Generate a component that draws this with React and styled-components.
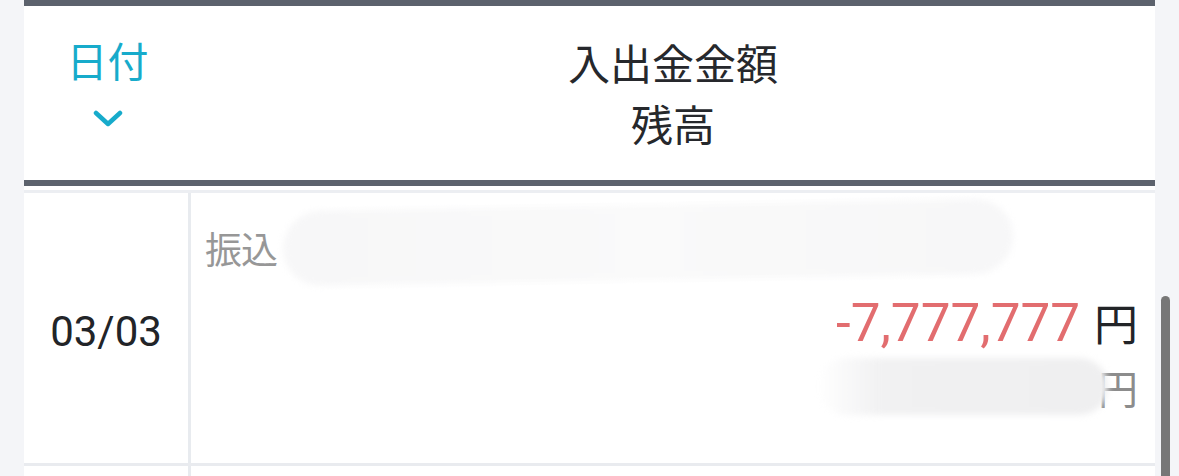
import * as React from "react";
import styled, { createGlobalStyle } from "styled-components";

const GlobalStyle = createGlobalStyle`
  html, body {
    margin: 0;
    padding: 0;
    background: #f4f5f8;
  }

  body {
    font-family: Roboto, "Noto Sans CJK JP", sans-serif;
    color: #222428;
  }
`;

const rows = [
  { date: "03/03", kind: "振込", amount: "-7,777,777" },
];

const Chevron = () => (
  <svg width="30" height="20" viewBox="0 0 30 20" aria-hidden="true">
    <polyline
      points="3,4 15,15 27,4"
      fill="none"
      stroke="#17abcb"
      strokeWidth="4.5"
      strokeLinecap="round"
      strokeLinejoin="round"
    />
  </svg>
);

const App = () => {
  return (
    <Page>
      <GlobalStyle />
      <Ledger>
        <HeadRow>
          <DateHead>
            <span>日付</span>
            <Chevron />
          </DateHead>
          <AmountHead>
            <div>入出金金額</div>
            <div>残高</div>
          </AmountHead>
        </HeadRow>

        {rows.map((row) => (
          <BodyRow key={row.date}>
            <DateCell>{row.date}</DateCell>
            <DetailCell>
              <DescLine>
                <Kind>{row.kind}</Kind>
                <Smudge $width={730} $height={75} />
              </DescLine>
              <AmountLine>
                <Amount $negative={row.amount.startsWith("-")}>
                  {row.amount}
                </Amount>
                <Yen>円</Yen>
              </AmountLine>
              <BalanceLine>
                <Smudge $width={290} $height={57} $fade />
                <Yen $muted>円</Yen>
              </BalanceLine>
            </DetailCell>
          </BodyRow>
        ))}

        <BodyRow $stub>
          <DateCell />
          <DetailCell />
        </BodyRow>
      </Ledger>

      <Gutter>
        <Thumb />
      </Gutter>
    </Page>
  );
};

const Page = styled.div`
  display: flex;
  height: 476px;
  padding-left: 24px;
  overflow: hidden;
  box-sizing: border-box;
`;

const Ledger = styled.div`
  width: 1131px;
  background: #ffffff;
  display: flex;
  flex-direction: column;
`;

const HeadRow = styled.div`
  display: grid;
  grid-template-columns: 167px 1fr;
  flex-shrink: 0;
  height: 174px;
  border-top: 6px solid #5c626d;
  border-bottom: 6px solid #5c626d;
  font-family: "Noto Sans CJK JP", sans-serif;
`;

const DateHead = styled.div`
  display: flex;
  flex-direction: column;
  align-items: center;
  padding-top: 33px;
  color: #17abcb;
  font-size: 41px;
  line-height: 1;

  svg {
    margin-top: 29px;
  }
`;

const AmountHead = styled.div`
  display: flex;
  flex-direction: column;
  align-items: center;
  padding-top: 25px;
  font-size: 42px;
  line-height: 61px;
  color: #26282c;
`;

const BodyRow = styled.div`
  display: grid;
  grid-template-columns: 167px 1fr;
  flex-shrink: 0;
  height: ${(p) => (p.$stub ? "40px" : "270px")};
  margin-top: ${(p) => (p.$stub ? "0" : "4px")};
  border-top: ${(p) => (p.$stub ? "none" : "3px solid #eceef2")};
  border-bottom: ${(p) => (p.$stub ? "none" : "3px solid #e9ebef")};
`;

const DateCell = styled.div`
  display: flex;
  align-items: center;
  justify-content: center;
  border-right: 3px solid #e8ebef;
  font-family: Roboto, sans-serif;
  font-size: 42px;
  color: #222428;
  padding-top: 6px;
`;

const DetailCell = styled.div`
  display: flex;
  flex-direction: column;
  padding: 12px 17px 0 14px;
  min-width: 0;
`;

const DescLine = styled.div`
  display: flex;
  align-items: flex-start;
  height: 75px;
`;

const Kind = styled.span`
  margin-top: 25px;
  font-family: "Noto Sans CJK JP", sans-serif;
  font-size: 37px;
  line-height: 1;
  color: #979797;
  letter-spacing: -1px;
`;

const Smudge = styled.span`
  position: relative;
  z-index: 1;
  flex-shrink: 0;
  width: ${(p) => p.$width}px;
  height: ${(p) => p.$height}px;
  margin-left: ${(p) => (p.$fade ? "0" : "6px")};
  margin-right: ${(p) => (p.$fade ? "-10px" : "0")};
  border-radius: ${(p) => p.$height / 2}px;
  background: ${(p) =>
    p.$fade
      ? "linear-gradient(90deg, rgba(240,240,241,0) 0%, #f1f1f2 22%, #efeff0 100%)"
      : "linear-gradient(90deg, #f7f7f8 0%, #fafafa 50%, #f7f7f8 100%)"};
  filter: blur(3px);
  transform: ${(p) => (p.$fade ? "none" : "skewY(-1deg)")};
`;

const AmountLine = styled.div`
  display: flex;
  align-items: baseline;
  justify-content: flex-end;
  margin-top: 16px;
  height: 52px;
  line-height: 52px;
`;

const Amount = styled.span`
  font-family: Roboto, sans-serif;
  font-size: 53px;
  color: ${(p) => (p.$negative ? "#e26d6f" : "#222428")};
  margin-right: 14px;
`;

const Yen = styled.span`
  font-family: "Noto Sans CJK JP", sans-serif;
  font-size: ${(p) => (p.$muted ? "40px" : "44px")};
  color: ${(p) => (p.$muted ? "#8c8c8c" : "#222428")};
`;

const BalanceLine = styled.div`
  display: flex;
  align-items: center;
  justify-content: flex-end;
  margin-top: 10px;
  height: 57px;
`;

const Gutter = styled.div`
  flex: 1;
  padding: 296px 0 0 6px;
  box-sizing: border-box;
`;

const Thumb = styled.div`
  width: 9px;
  height: 200px;
  background: #777777;
  border-radius: 5px 5px 0 0;
`;

export default App;
